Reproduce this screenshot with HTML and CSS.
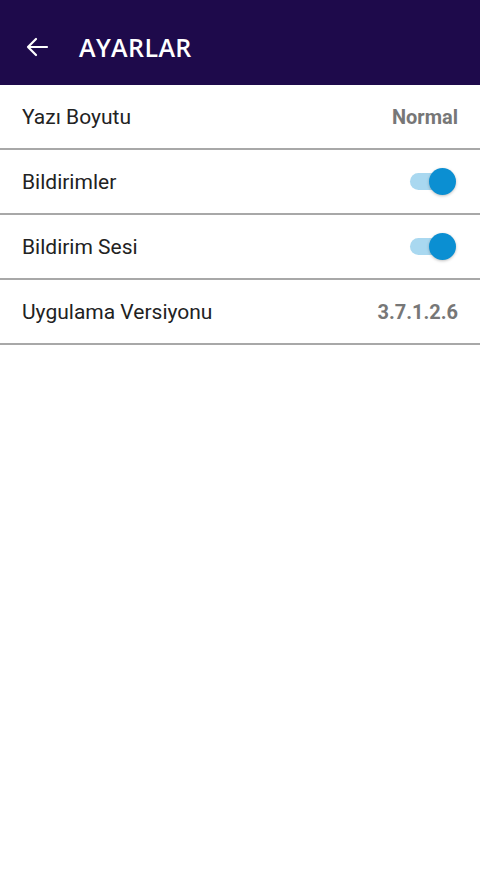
FILE: index.html
```html
<!DOCTYPE html>
<html lang="tr">
<head>
  <meta charset="UTF-8">
  <title>Ayarlar</title>
  <link rel="stylesheet" href="styles.css">
</head>
<body>
  <header class="topbar">
    <svg class="back" width="24" height="24" viewBox="0 0 24 24">
      <path d="M22 12H3M11 4l-8 8 8 8" fill="none" stroke="#fff" stroke-width="2.2" stroke-linecap="round" stroke-linejoin="round"/>
    </svg>
    <h1>AYARLAR</h1>
  </header>

  <div class="list">
    <div class="row">
      <span class="label">Yazı Boyutu</span>
      <span class="value">Normal</span>
    </div>
    <div class="row">
      <span class="label">Bildirimler</span>
      <span class="toggle"><span class="thumb"></span></span>
    </div>
    <div class="row">
      <span class="label">Bildirim Sesi</span>
      <span class="toggle"><span class="thumb"></span></span>
    </div>
    <div class="row">
      <span class="label">Uygulama Versiyonu</span>
      <span class="value">3.7.1.2.6</span>
    </div>
  </div>
</body>
</html>
```

FILE: styles.css
```css
* {
  box-sizing: border-box;
}

body {
  margin: 0;
  font-family: Roboto, sans-serif;
  background: #fff;
}

.topbar {
  height: 85px;
  background-color: #1e0a4b;
  display: flex;
  align-items: center;
  padding: 8px 0 0 25px;
}

.back {
  margin-right: 30px;
}

h1 {
  margin: 0;
  color: #fff;
  font-family: "Open Sans", sans-serif;
  font-size: 25px;
  font-weight: 600;
  letter-spacing: 0.4px;
}

.row {
  height: 65px;
  display: flex;
  align-items: center;
  justify-content: space-between;
  padding: 0 22px;
  border-bottom: 2px solid #a8a8a8;
}

.label {
  font-size: 21px;
  color: #222;
}

.value {
  font-size: 20px;
  font-weight: 700;
  color: #777;
}

.toggle {
  position: relative;
  width: 44px;
  height: 17px;
  border-radius: 9px;
  background-color: #a9d8f0;
  margin-right: 4px;
}

.thumb {
  position: absolute;
  right: -2px;
  top: -5px;
  width: 27px;
  height: 27px;
  border-radius: 50%;
  background-color: #0b8fd2;
  box-shadow: 0 1px 3px rgba(0, 0, 0, 0.25);
}
```
